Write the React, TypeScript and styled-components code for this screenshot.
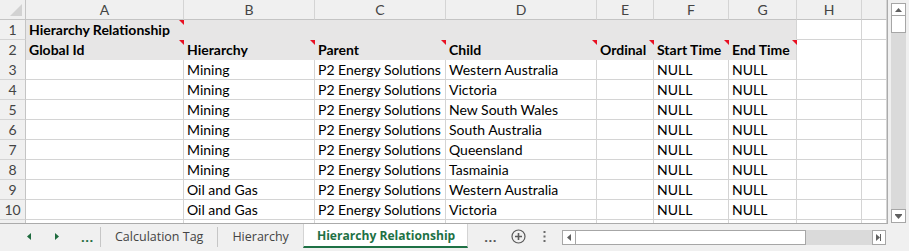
import styled, { createGlobalStyle } from "styled-components";

const GlobalStyle = createGlobalStyle`
  html, body {
    margin: 0;
    padding: 0;
    background: #ffffff;
  }
  body {
    font-family: Lato, "Liberation Sans", sans-serif;
  }
`;

const widths = [26, 158, 131, 131, 151, 57, 75, 68, 65, 25];
const letters = ["A", "B", "C", "D", "E", "F", "G", "H", ""];
const template = widths.map((w) => `${w}px`).join(" ");

const headers = ["Global Id", "Hierarchy", "Parent", "Child", "Ordinal", "Start Time", "End Time"];

const data = [
  ["Mining", "Western Australia"],
  ["Mining", "Victoria"],
  ["Mining", "New South Wales"],
  ["Mining", "South Australia"],
  ["Mining", "Queensland"],
  ["Mining", "Tasmainia"],
  ["Oil and Gas", "Western Australia"],
  ["Oil and Gas", "Victoria"],
];

const App = () => {
  return (
    <Page>
      <GlobalStyle />
      <Sheet>
        <Grid>
          <Row>
            <Corner />
            {letters.map((l, i) => (
              <ColHead key={i}>{l}</ColHead>
            ))}
          </Row>

          <Row>
            <RowHead>1</RowHead>
            <Cell $fill $bold $marker>
              Hierarchy Relationship
            </Cell>
            {[1, 2, 3, 4, 5, 6].map((i) => (
              <Cell key={i} $fill $edge={i === 6} />
            ))}
            <Cell />
            <Cell />
          </Row>

          <Row>
            <RowHead>2</RowHead>
            {headers.map((h, i) => (
              <Cell key={h} $fill $bold $marker $thick $edge={i === 6}>
                {h}
              </Cell>
            ))}
            <Cell />
            <Cell />
          </Row>

          {data.map((r, i) => (
            <Row key={i}>
              <RowHead>{i + 3}</RowHead>
              <Cell />
              <Cell>{r[0]}</Cell>
              <Cell>P2 Energy Solutions</Cell>
              <Cell>{r[1]}</Cell>
              <Cell />
              <Cell>NULL</Cell>
              <Cell>NULL</Cell>
              <Cell />
              <Cell />
            </Row>
          ))}

          {/* row 11 only peeks out under row 10 */}
          <Row>
            <RowHead />
            {letters.map((_, i) => (
              <Cell key={i} />
            ))}
          </Row>
        </Grid>

        <VScrollArea>
          <VScroll>
            <ArrowBox $h={13}>
              <svg width="7" height="4" viewBox="0 0 7 4">
                <path d="M0 4 L3.5 0 L7 4 Z" fill="#606060" />
              </svg>
            </ArrowBox>
            <VThumb />
            <VTrack />
            <ArrowBox $h={14}>
              <svg width="7" height="5" viewBox="0 0 7 5">
                <rect x="0" y="0" width="7" height="1" fill="#606060" />
                <path d="M0 1 L3.5 5 L7 1 Z" fill="#606060" />
              </svg>
            </ArrowBox>
          </VScroll>
        </VScrollArea>
      </Sheet>

      <TabBar>
        <Nav>
          <NavArrow>
            <svg width="4" height="7" viewBox="0 0 4 7">
              <path d="M4 0 L0 3.5 L4 7 Z" fill="#1e6b3e" />
            </svg>
          </NavArrow>
          <NavArrow>
            <svg width="4" height="7" viewBox="0 0 4 7">
              <path d="M0 0 L4 3.5 L0 7 Z" fill="#1e6b3e" />
            </svg>
          </NavArrow>
          <Dots $green>...</Dots>
        </Nav>
        <Sep />
        <Tab>Calculation Tag</Tab>
        <Sep />
        <Tab>Hierarchy</Tab>
        <ActiveTab>Hierarchy Relationship</ActiveTab>
        <Dots>...</Dots>
        <AddButton>
          <svg width="15" height="15" viewBox="0 0 15 15">
            <circle cx="7.5" cy="7.5" r="6.5" fill="none" stroke="#5a5a5a" strokeWidth="1.2" />
            <path d="M7.5 4 V11 M4 7.5 H11" stroke="#5a5a5a" strokeWidth="1.6" />
          </svg>
        </AddButton>
        <Kebab>
          <svg width="3" height="13" viewBox="0 0 3 13">
            <rect x="0.5" y="1" width="2" height="2" fill="#6a6a6a" />
            <rect x="0.5" y="5.5" width="2" height="2" fill="#6a6a6a" />
            <rect x="0.5" y="10" width="2" height="2" fill="#6a6a6a" />
          </svg>
        </Kebab>
        <HScroll>
          <HArrow>
            <svg width="4" height="7" viewBox="0 0 4 7">
              <path d="M4 0 L0 3.5 L4 7 Z" fill="#606060" />
            </svg>
          </HArrow>
          <HThumb />
          <HTrack />
          <HArrow>
            <svg width="5" height="7" viewBox="0 0 5 7">
              <path d="M0 0 L4 3.5 L0 7 Z" fill="#606060" />
              <rect x="4" y="0" width="1" height="7" fill="#606060" />
            </svg>
          </HArrow>
        </HScroll>
      </TabBar>
    </Page>
  );
};

export default App;

const Page = styled.div`
  width: 909px;
  height: 251px;
  overflow: hidden;
  display: flex;
  flex-direction: column;
  background: #f0f0f0;
`;

const Sheet = styled.div`
  display: flex;
  height: 224px;
`;

const Grid = styled.div`
  width: 888px;
  height: 224px;
  overflow: hidden;
  background: #ffffff;
  border-right: 1px solid #ababab;
  border-bottom: 1px solid #ababab;
  box-sizing: border-box;
`;

const Row = styled.div`
  display: grid;
  grid-template-columns: ${template};
  height: 20px;
`;

const Corner = styled.div`
  position: relative;
  background: #f0f0f0;
  border-right: 1px solid #c4c4c4;
  border-bottom: 1px solid #c4c4c4;
  box-sizing: border-box;

  &::after {
    content: "";
    position: absolute;
    right: 3px;
    bottom: 3px;
    width: 12px;
    height: 12px;
    background: #d2d2d2;
    clip-path: polygon(100% 0, 100% 100%, 0 100%);
  }
`;

const ColHead = styled.div`
  background: #f0f0f0;
  border-right: 1px solid #d4d4d4;
  border-bottom: 1px solid #c4c4c4;
  box-sizing: border-box;
  text-align: center;
  font-size: 14px;
  line-height: 19px;
  color: #444444;
`;

const RowHead = styled.div`
  background: #f0f0f0;
  border-right: 1px solid #c4c4c4;
  border-bottom: 1px solid #d4d4d4;
  box-sizing: border-box;
  text-align: center;
  font-size: 14px;
  line-height: 19px;
  color: #444444;
`;

const Cell = styled.div<{
  $fill?: boolean;
  $bold?: boolean;
  $marker?: boolean;
  $thick?: boolean;
  $edge?: boolean;
}>`
  position: relative;
  box-sizing: border-box;
  padding: 0 3px;
  white-space: nowrap;
  font-size: 14px;
  color: #000000;
  font-weight: ${(p) => (p.$bold ? 700 : 400)};
  background: ${(p) => (p.$fill ? "#e7e6e6" : "#ffffff")};
  border-right: 1px solid ${(p) => (p.$fill && !p.$edge ? "#e7e6e6" : "#d4d4d4")};
  border-bottom: ${(p) =>
    p.$thick ? "2px solid #000000" : p.$fill ? "1px solid #e7e6e6" : "1px solid #d4d4d4"};
  line-height: ${(p) => (p.$thick ? "20px" : "19px")};

  &::after {
    content: "";
    display: ${(p) => (p.$marker ? "block" : "none")};
    position: absolute;
    top: 0;
    right: -1px;
    width: 5px;
    height: 5px;
    background: #e81123;
    clip-path: polygon(0 0, 100% 0, 100% 100%);
  }
`;

const VScrollArea = styled.div`
  width: 21px;
  background: #f0f0f0;
  padding: 3px 0 0 3px;
  box-sizing: border-box;
`;

const VScroll = styled.div`
  width: 15px;
  height: 220px;
  display: flex;
  flex-direction: column;
  background: #dadada;
`;

const ArrowBox = styled.div<{ $h: number }>`
  height: ${(p) => p.$h}px;
  box-sizing: border-box;
  border: 1px solid #a6a6a6;
  background: #ffffff;
  display: flex;
  align-items: center;
  justify-content: center;
`;

const VThumb = styled.div`
  height: 17px;
  box-sizing: border-box;
  border: 1px solid #a6a6a6;
  border-top: none;
  background: #ffffff;
`;

const VTrack = styled.div`
  flex: 1;
  background: #dadada;
`;

const TabBar = styled.div`
  height: 27px;
  display: flex;
  align-items: flex-start;
  background: #f0f0f0;
  font-family: "Open Sans", "Liberation Sans", sans-serif;
  font-size: 12.5px;
  color: #444444;
`;

const Nav = styled.div`
  display: flex;
  align-items: center;
  height: 24px;
  padding-left: 24px;
  width: 100px;
  box-sizing: border-box;
`;

const NavArrow = styled.div`
  width: 28px;
  display: flex;
  align-items: center;
  padding-left: 3px;
  box-sizing: border-box;
`;

const Dots = styled.div<{ $green?: boolean }>`
  display: flex;
  align-items: center;
  height: 24px;
  font-weight: 700;
  font-size: 13px;
  letter-spacing: 0.5px;
  color: ${(p) => (p.$green ? "#1e6b3e" : "#555555")};
  margin-left: ${(p) => (p.$green ? "1px" : "16px")};
  padding-top: 2px;
  box-sizing: border-box;
`;

const Sep = styled.div`
  width: 1px;
  height: 20px;
  margin-top: 3px;
  background: #c6c6c6;
`;

const Tab = styled.div`
  height: 24px;
  padding: 0 14px;
  display: flex;
  align-items: center;
  white-space: nowrap;
`;

const ActiveTab = styled.div`
  height: 24px;
  padding: 0 12px 0 13px;
  display: flex;
  align-items: center;
  white-space: nowrap;
  background: #ffffff;
  color: #1e7145;
  font-weight: 700;
  font-size: 12.1px;
  border-left: 1px solid #d4d4d4;
  border-right: 1px solid #d4d4d4;
  border-bottom: 2px solid #1e7145;
  box-sizing: border-box;
`;

const AddButton = styled.div`
  margin-left: 14px;
  height: 24px;
  display: flex;
  align-items: center;
`;

const Kebab = styled.div`
  margin-left: 17px;
  height: 24px;
  display: flex;
  align-items: center;
`;

const HScroll = styled.div`
  margin-left: 16px;
  margin-top: 6px;
  width: 324px;
  height: 15px;
  display: flex;
`;

const HArrow = styled.div`
  width: 14px;
  box-sizing: border-box;
  border: 1px solid #a6a6a6;
  background: #ffffff;
  display: flex;
  align-items: center;
  justify-content: center;
`;

const HThumb = styled.div`
  width: 230px;
  box-sizing: border-box;
  border: 1px solid #a6a6a6;
  border-left: none;
  background: #ffffff;
`;

const HTrack = styled.div`
  flex: 1;
  background: #dadada;
`;
